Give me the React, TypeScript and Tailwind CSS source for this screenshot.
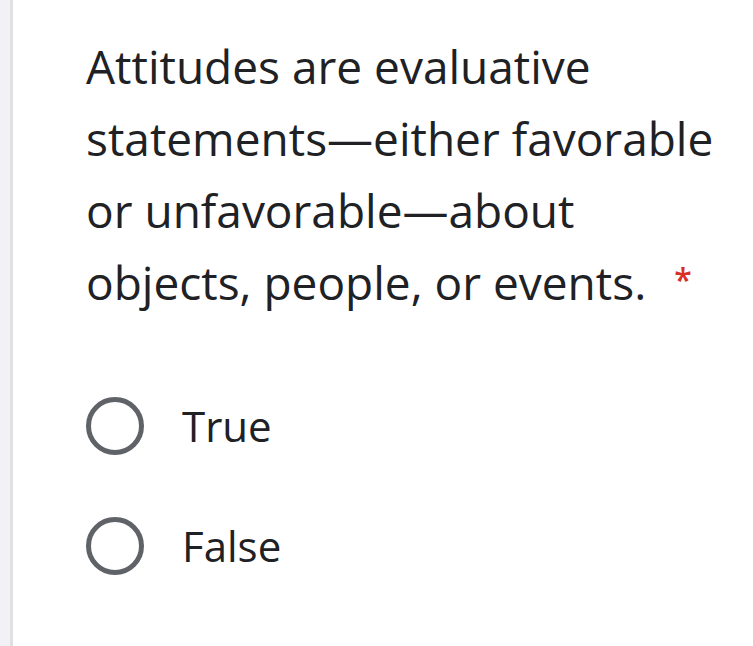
export default function App() {
  const options = ["True", "False"];
  return (
    <div className="flex h-[646px] w-[753px] bg-white font-['Open_Sans',sans-serif] text-[#202124]">
      <div className="w-[10px] bg-[#f1f1f6]" />
      <div className="w-[3px] bg-[#e0e0e0]" />
      <div className="flex-1 pl-[73px] pt-[30px]">
        <div className="text-[46px] leading-[72px]">
          Attitudes are evaluative
          <br />
          statements—either favorable
          <br />
          or unfavorable—about
          <br />
          objects, people, or events.
          <span className="relative top-[-8px] pl-[28px] text-[32px] font-semibold text-[#d93025]">*</span>
        </div>
        <div className="mt-[73px] flex flex-col gap-[62px]">
          {options.map((o) => (
            <div key={o} className="flex items-center">
              <div className="h-[58px] w-[58px] rounded-full border-[5px] border-[#5f6368]" />
              <span className="ml-[38px] text-[42px] leading-none">{o}</span>
            </div>
          ))}
        </div>
      </div>
    </div>
  );
}
